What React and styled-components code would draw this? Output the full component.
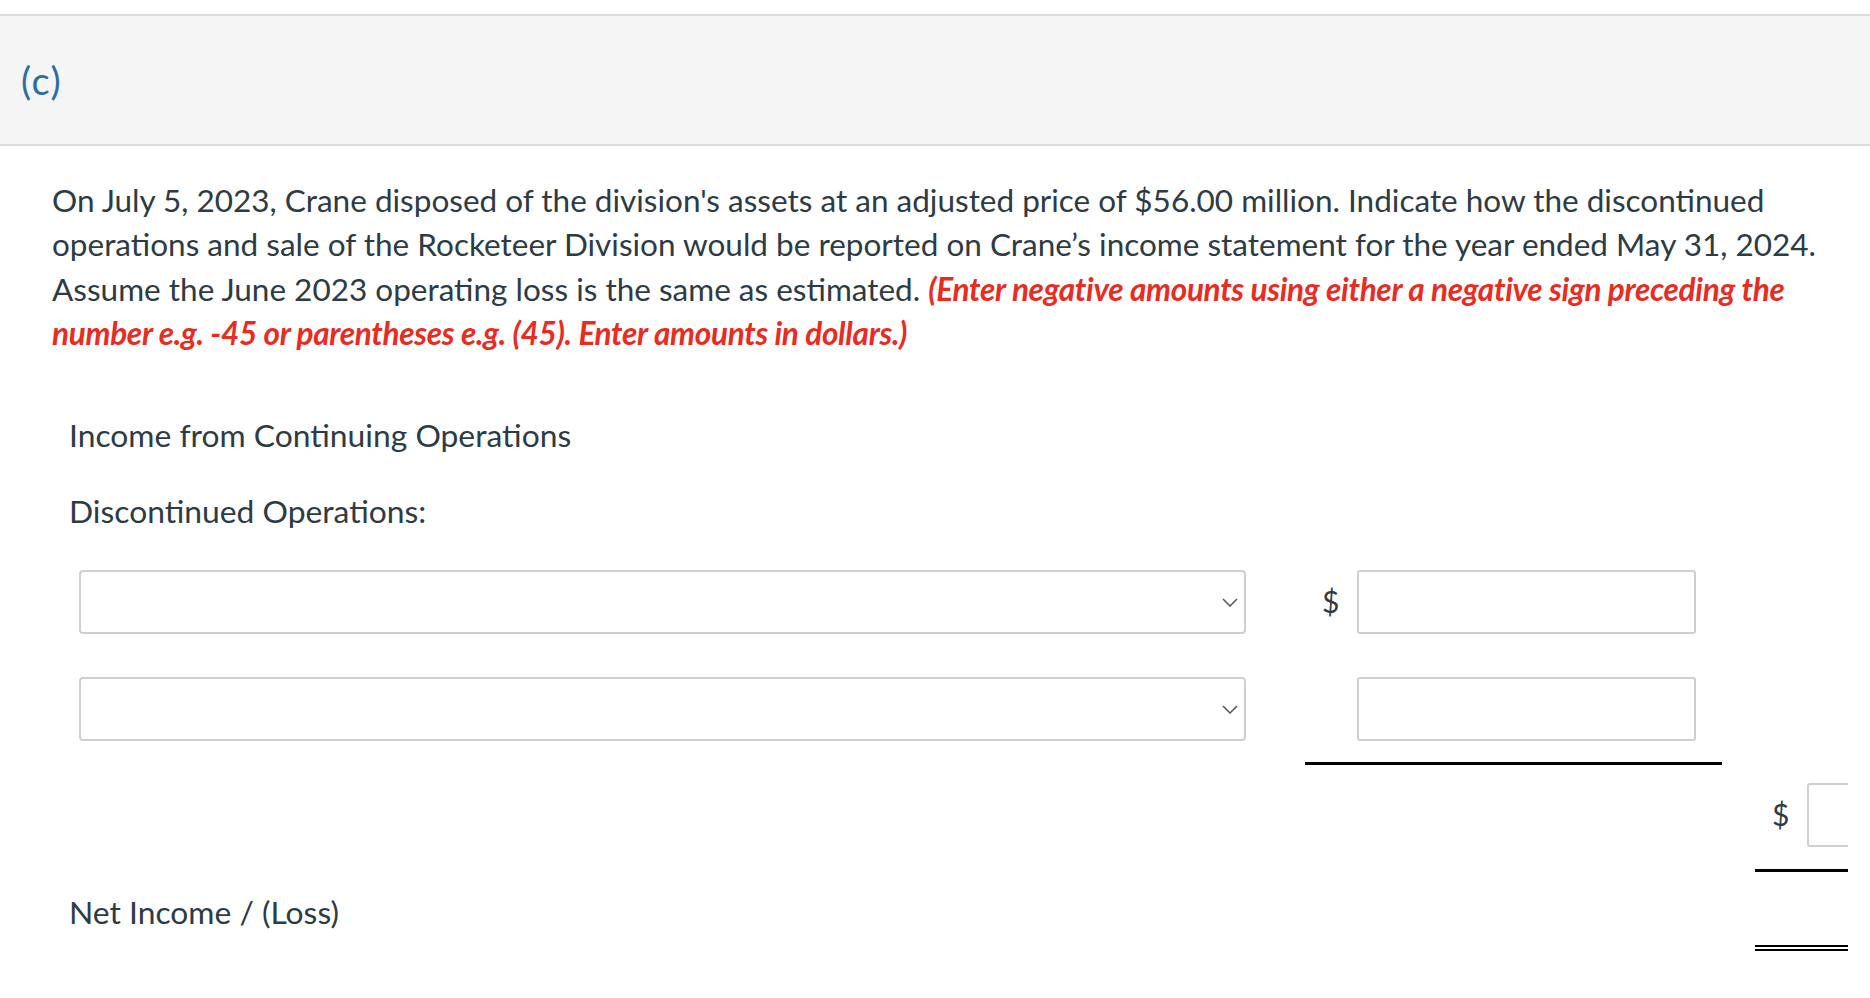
import React from 'react'
import styled, { createGlobalStyle } from 'styled-components'

const GlobalStyle = createGlobalStyle`
    body {
        margin: 0;
        background: #fff;
        font-family: Lato, "Open Sans", sans-serif;
        color: #2d3b45;
    }
`

const Page = styled.div`
    padding-top: 14px;
`

const PartHeader = styled.div`
    display: flex;
    align-items: center;
    height: 128px;
    padding-left: 21px;
    background: #f5f5f5;
    border-top: 2px solid #dcdcdc;
    border-bottom: 2px solid #dcdcdc;
    color: #2b6ea6;
    font-size: 38px;
    letter-spacing: 1.5px;
`

const Question = styled.p`
    margin: 32px 0 0;
    padding: 0 36px 0 52px;
    font-size: 31.5px;
    line-height: 44.3px;
`

const Hint = styled.em`
    color: #ea2b1f;
    font-weight: 700;
    letter-spacing: -0.3px;
`

const Sheet = styled.div`
    margin-top: 42px;
    width: 1848px;
    overflow: hidden;
`

const Row = styled.div`
    display: grid;
    grid-template-columns: 1236px 417px 33px 300px;
    height: ${p => p.h}px;
    padding-left: 69px;
`

const Label = styled.div`
    display: flex;
    align-items: center;
    font-size: 31.8px;
    white-space: nowrap;
`

const Cell = styled.div`
    display: flex;
    align-items: ${p => p.top ? 'flex-start' : 'center'};
    padding-top: ${p => p.top ? p.top : 0}px;
    padding-left: ${p => p.pad || 0}px;
    border-bottom: ${p => p.rule === 'double' ? '6px double #000' : p.rule ? '3px solid #000' : 'none'};
`

const SelectWrap = styled.div`
    position: relative;
    width: 1167px;
    height: 64px;
    margin-left: 10px;
`

const Select = styled.select`
    appearance: none;
    width: 100%;
    height: 100%;
    box-sizing: border-box;
    border: 2px solid #cfcfcf;
    border-radius: 4px;
    background: #fff;
    font: inherit;
`

const Chevron = styled.svg`
    position: absolute;
    right: 8px;
    top: 28px;
    pointer-events: none;
`

const Dollar = styled.span`
    width: 35px;
    flex-shrink: 0;
    font-size: 30px;
    color: #2d3b45;
    line-height: 63px;
`

const Amount = styled.input`
    width: ${p => p.w || 339}px;
    height: 64px;
    box-sizing: border-box;
    border: 2px solid #cfcfcf;
    border-radius: 3px;
    flex-shrink: 0;
`

const Dropdown = () => (
    <SelectWrap>
        <Select defaultValue="">
            <option value=""></option>
        </Select>
        <Chevron width="16" height="9" viewBox="0 0 16 9">
            <path d="M1 1l7 7 7-7" fill="none" stroke="#555" strokeWidth="1.5" />
        </Chevron>
    </SelectWrap>
)

const App = () => (
    <>
        <GlobalStyle />
        <Page>
            <PartHeader>(c)</PartHeader>
            <Question>
                On July 5, 2023, Crane disposed of the division's assets at an adjusted price of $56.00 million. Indicate how the discontinued
                operations and sale of the Rocketeer Division would be reported on Crane’s income statement for the year ended May 31, 2024.
                Assume the June 2023 operating loss is the same as estimated. <Hint>(Enter negative amounts using either a negative sign preceding the number e.g. -45 or parentheses e.g. (45). Enter amounts in dollars.)</Hint>
            </Question>
            <Sheet>
                <Row h={76}>
                    <Label>Income from Continuing Operations</Label>
                    <Cell />
                    <Cell />
                    <Cell />
                </Row>
                <Row h={76}>
                    <Label>Discontinued Operations:</Label>
                    <Cell />
                    <Cell />
                    <Cell />
                </Row>
                <Row h={106}>
                    <Cell top={21}><Dropdown /></Cell>
                    <Cell top={21} pad={17}><Dollar>$</Dollar><Amount /></Cell>
                    <Cell />
                    <Cell />
                </Row>
                <Row h={110}>
                    <Cell top={22}><Dropdown /></Cell>
                    <Cell top={22} pad={52} rule="solid"><Amount /></Cell>
                    <Cell />
                    <Cell />
                </Row>
                <Row h={107}>
                    <Cell />
                    <Cell />
                    <Cell />
                    <Cell top={18} pad={17} rule="solid"><Dollar>$</Dollar><Amount w={160} /></Cell>
                </Row>
                <Row h={79}>
                    <Label>Net Income / (Loss)</Label>
                    <Cell />
                    <Cell />
                    <Cell rule="double" />
                </Row>
            </Sheet>
        </Page>
    </>
)

export default App
